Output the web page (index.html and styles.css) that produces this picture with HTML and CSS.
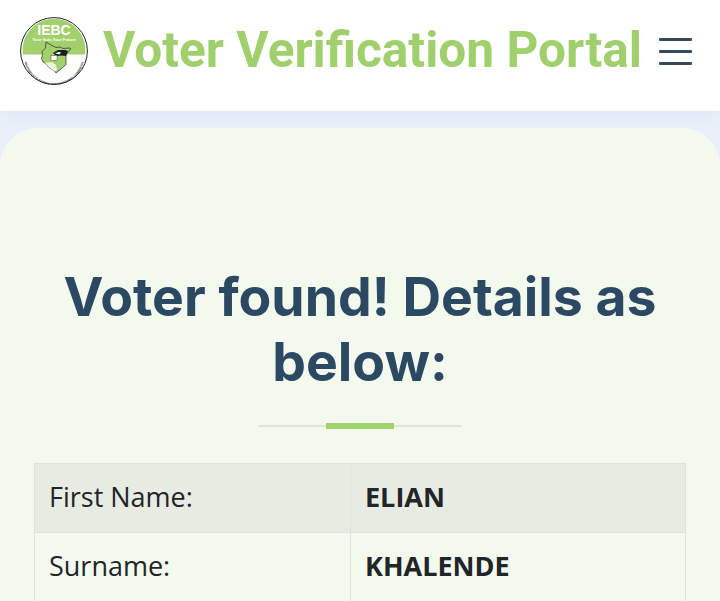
FILE: index.html
```html
<!DOCTYPE html>
<html lang="en">
<head>
<meta charset="utf-8">
<title>Voter Verification Portal</title>
<link rel="stylesheet" href="styles.css">
</head>
<body>
<header class="topbar">
  <div class="brand">
    <svg class="logo" viewBox="0 0 68 68" width="68" height="68" aria-label="IEBC logo">
      <circle cx="34" cy="34" r="33.400" fill="#fff" stroke="#222" stroke-width="1"/>
      <path d="M2.900 37.500A31.400 31.400 0 1 1 65.100 37.500z" fill="#a2d06c"/>
      <text class="logo-iebc" x="34" y="18" text-anchor="middle">IEBC</text>
      <text class="logo-tag" x="34" y="23.600" text-anchor="middle">Your Vote,Your Future</text>
      <path d="M26 25l5 3 5 2.500 4-.5 3 1.500 7-.5.800 1-4.800 5.500v10l-1.500 1.500L36 56l-2-2.500-5-3-3-3.500-3-2-1.500-3.500 1-4-.5-3 3.500-3.500z" fill="#a2d06c" stroke="#2a2a2a" stroke-width=".7"/>
      <path d="M33 36l5-3h7l3 1-2 5-5-.5-3 .5-3-1z" fill="#1b1b1b"/>
      <path d="M35 36.500l3.500-1.500 2.500.5-1.500 2z" fill="#fff"/>
      <rect x="31" y="38.500" width="6" height="5" fill="#fff" stroke="#2a2a2a" stroke-width=".4"/>
      <path d="M25 46l7-1 4 3 1 5-2 1.500-5-3.500z" fill="#eef5e0"/>
      <path id="logoArc" d="M3.500 37.500A30.500 30.500 0 0 0 64.500 37.500" fill="none"/>
      <text class="logo-arc"><textPath href="#logoArc" startOffset="50%" text-anchor="middle">INDEPENDENT ELECTORAL AND BOUNDARIES COMMISSION</textPath></text>
    </svg>
    <span class="title">Voter Verification Portal</span>
  </div>
  <button class="menu" aria-label="Menu"><span></span><span></span><span></span></button>
</header>
<main class="page">
  <section class="card">
    <h1 class="heading">Voter found! Details as below:</h1>
    <div class="divider"><span class="divider-mark"></span></div>
    <table class="details">
      <tr class="odd"><td class="label">First Name:</td><th>ELIAN</th></tr>
      <tr><td class="label">Surname:</td><th>KHALENDE</th></tr>
    </table>
  </section>
</main>
</body>
</html>
```
FILE: styles.css
```css
* { box-sizing: border-box; }
html, body { margin: 0; height: 100%; overflow: hidden; }
body { background: #e9f0fa; font-family: "Open Sans", sans-serif; color: #212529; }
.topbar {
  height: 111px;
  background: #fff;
  display: flex;
  align-items: flex-start;
  justify-content: space-between;
  padding: 17px 28px 0 20px;
  box-shadow: 0 2px 15px rgba(25, 60, 100, 0.06);
  position: relative;
}
.brand { display: flex; align-items: flex-start; gap: 15px; }
.logo { display: block; flex: none; }
.logo-iebc { font: 700 14px "Liberation Sans", sans-serif; fill: #fff; }
.logo-tag { font: 700 4.2px "Liberation Sans", sans-serif; fill: #fff; }
.logo-arc { font: 700 2.7px "Liberation Sans", sans-serif; fill: #222; }
.title {
  font: 700 49.6px/62px Roboto, sans-serif;
  color: #9fd06c;
  white-space: nowrap;
  margin-top: 2px;
}
.menu {
  background: none; border: 0; padding: 0;
  width: 33px; height: 27px; margin-top: 20.500px;
  display: flex; flex-direction: column; justify-content: space-between;
}
.menu span { display: block; height: 3px; border-radius: 1px; background: #34495e; }
.page { padding-top: 17px; }
.card {
  background: #f3f9ec;
  border-radius: 38px 38px 0 0;
  padding: 136px 34px 0;
  height: 473px;
}
.heading {
  margin: 0 auto;
  width: 640px;
  font: 700 53.500px/65px Inter, sans-serif;
  color: #2c4964;
  text-align: center;
}
.divider {
  width: 204px; height: 2px; margin: 31px auto 0;
  background: #dfe4da;
  position: relative;
}
.divider-mark {
  position: absolute; left: 68px; top: -2px;
  width: 68px; height: 6px; background: #a0d26d;
}
.details {
  margin-top: 36px;
  width: 652px;
  border-collapse: collapse;
  table-layout: fixed;
  font-size: 27px;
}
.details td, .details th {
  height: 69px;
  padding: 0 14px 2px;
  border: 1px solid #dee2e0;
  text-align: left;
  line-height: 36px;
}
.details .label { width: 316px; font-weight: 400; }
.details th { font-weight: 700; }
.odd { background: #e7ebe2; }
```
